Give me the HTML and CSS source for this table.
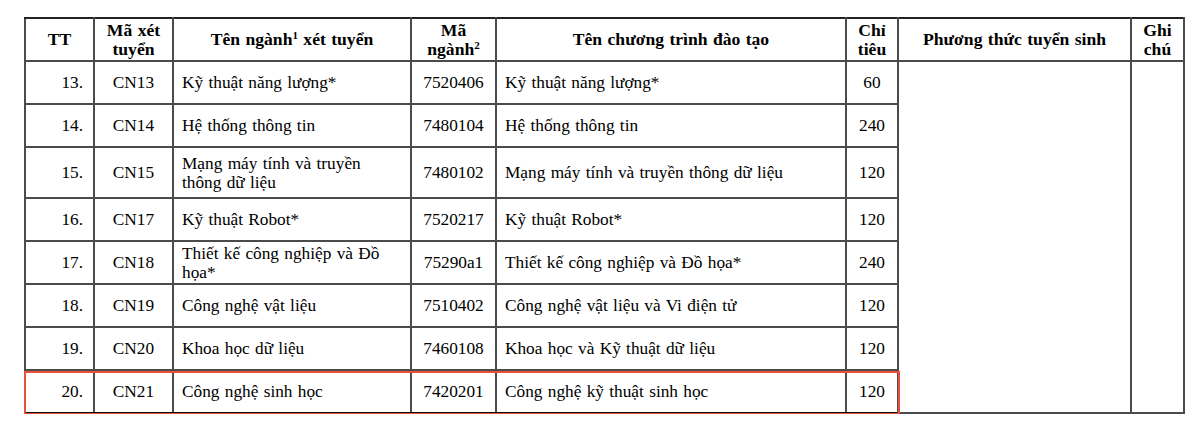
FILE: index.html
```html
<!DOCTYPE html>
<html lang="vi">
<head>
<meta charset="utf-8">
<title>Bảng ngành xét tuyển</title>
<link rel="stylesheet" href="styles.css">
</head>
<body>
<div class="page">
  <div class="table-wrap">
    <table class="admit">
      <colgroup>
        <col class="c-tt"><col class="c-ma"><col class="c-ten"><col class="c-mn"><col class="c-ctr"><col class="c-ct"><col class="c-pt"><col class="c-gc">
      </colgroup>
      <thead>
        <tr class="head">
          <th>TT</th>
          <th>Mã xét<br>tuyển</th>
          <th>Tên ngành<sup>1</sup> xét tuyển</th>
          <th>Mã<br>ngành<sup>2</sup></th>
          <th>Tên chương trình đào tạo</th>
          <th>Chỉ<br>tiêu</th>
          <th>Phương thức tuyển sinh</th>
          <th>Ghi<br>chú</th>
        </tr>
      </thead>
      <tbody>
        <tr><td class="num">13.</td><td class="ctr">CN13</td><td class="txt">Kỹ thuật năng lượng*</td><td class="ctr">7520406</td><td class="txt">Kỹ thuật năng lượng*</td><td class="ctr">60</td><td rowspan="8"></td><td rowspan="8"></td></tr>
        <tr><td class="num">14.</td><td class="ctr">CN14</td><td class="txt">Hệ thống thông tin</td><td class="ctr">7480104</td><td class="txt">Hệ thống thông tin</td><td class="ctr">240</td></tr>
        <tr class="tall"><td class="num">15.</td><td class="ctr">CN15</td><td class="txt">Mạng máy tính và truyền thông dữ liệu</td><td class="ctr">7480102</td><td class="txt">Mạng máy tính và truyền thông dữ liệu</td><td class="ctr">120</td></tr>
        <tr><td class="num">16.</td><td class="ctr">CN17</td><td class="txt">Kỹ thuật Robot*</td><td class="ctr">7520217</td><td class="txt">Kỹ thuật Robot*</td><td class="ctr">120</td></tr>
        <tr><td class="num">17.</td><td class="ctr">CN18</td><td class="txt">Thiết kế công nghiệp và Đồ họa*</td><td class="ctr">75290a1</td><td class="txt">Thiết kế công nghiệp và Đồ họa*</td><td class="ctr">240</td></tr>
        <tr><td class="num">18.</td><td class="ctr">CN19</td><td class="txt">Công nghệ vật liệu</td><td class="ctr">7510402</td><td class="txt">Công nghệ vật liệu và Vi điện tử</td><td class="ctr">120</td></tr>
        <tr><td class="num">19.</td><td class="ctr">CN20</td><td class="txt">Khoa học dữ liệu</td><td class="ctr">7460108</td><td class="txt">Khoa học và Kỹ thuật dữ liệu</td><td class="ctr">120</td></tr>
        <tr><td class="num">20.</td><td class="ctr">CN21</td><td class="txt">Công nghệ sinh học</td><td class="ctr">7420201</td><td class="txt">Công nghệ kỹ thuật sinh học</td><td class="ctr">120</td></tr>
      </tbody>
    </table>
    <div class="highlight"></div>
  </div>
</div>
</body>
</html>
```

FILE: styles.css
```css
html, body {
  margin: 0;
  padding: 0;
  background: #ffffff;
}

.page {
  padding: 17px 0 0 24px;
  font-family: "Liberation Serif", "Times New Roman", serif;
  color: #000;
}

.table-wrap {
  position: relative;
  width: 1161px;
}

.admit {
  border-collapse: collapse;
  table-layout: fixed;
  width: 1161px;
  font-size: 17.3px;
  word-spacing: 1px;
}

.c-tt { width: 69px; }
.c-ma { width: 79px; }
.c-ten { width: 238px; }
.c-mn { width: 85px; }
.c-ctr { width: 350px; }
.c-ct { width: 52px; }
.c-pt { width: 233px; }
.c-gc { width: 53px; }

.admit th,
.admit td {
  border: 2px solid #4b4b4b;
  padding: 0;
  vertical-align: middle;
  line-height: 19px;
}

.admit tr { height: 43px; }
.admit tr.tall { height: 51px; }

.admit thead th {
  border-top-color: #222;
  font-weight: bold;
  font-size: 17.6px;
  text-align: center;
  line-height: 19px;
}

.admit sup {
  font-size: 11px;
  line-height: 0;
  vertical-align: 6px;
}

.admit tbody tr:last-child td {
  border-bottom-color: #111;
}

.num {
  text-align: right;
  padding-right: 10px !important;
}

.ctr {
  text-align: center;
}

.txt {
  text-align: left;
  padding-left: 8px !important;
  padding-right: 6px !important;
}

.highlight {
  position: absolute;
  left: 0;
  bottom: -1px;
  width: 876px;
  height: 44px;
  border: 2px solid #e9503b;
  box-sizing: border-box;
  pointer-events: none;
}
```
